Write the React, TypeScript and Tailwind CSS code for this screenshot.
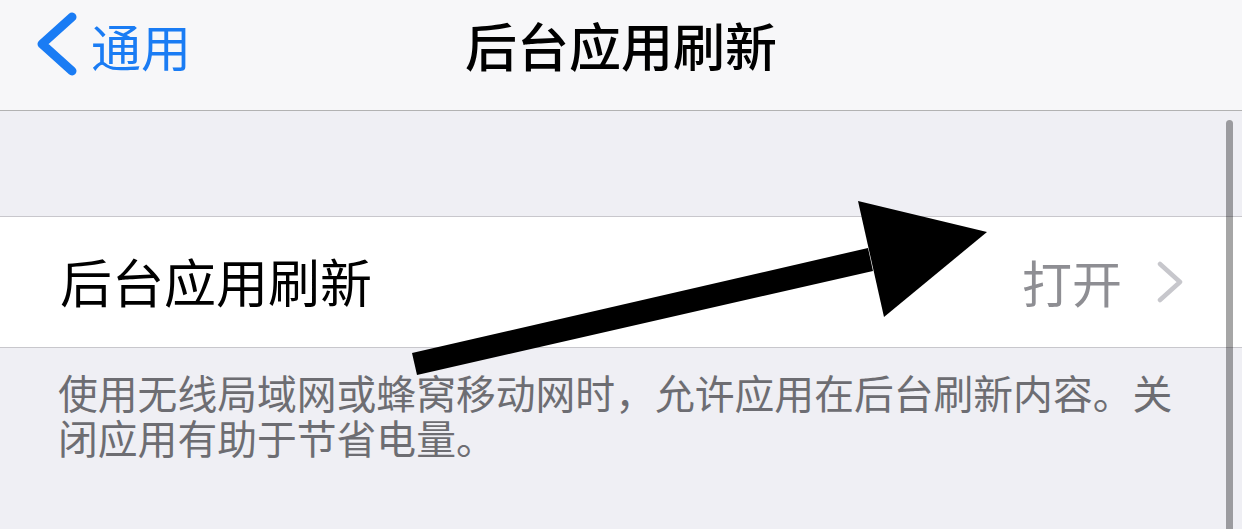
const cjk = { fontFamily: '"Noto Sans CJK SC", "Noto Sans", sans-serif' };

function BackChevron() {
  return (
    <svg width="44" height="66" viewBox="0 0 44 66" className="shrink-0">
      <polyline
        points="36,5 6,32 36,59"
        fill="none"
        stroke="#1a7cf4"
        strokeWidth="9"
        strokeLinecap="round"
        strokeLinejoin="round"
      />
    </svg>
  );
}

function RowChevron() {
  return (
    <svg width="28" height="42" viewBox="0 0 28 42" className="shrink-0">
      <polyline
        points="4,3 24,21 4,39"
        fill="none"
        stroke="#c7c7cc"
        strokeWidth="4.5"
        strokeLinecap="round"
        strokeLinejoin="round"
      />
    </svg>
  );
}

export default function App() {
  return (
    <div className="relative w-[1242px] h-[529px] overflow-hidden bg-[#efeff4]" style={cjk}>
      {/* nav bar */}
      <header className="grid grid-cols-[1fr_auto_1fr] items-center h-[111px] bg-[#f7f7f9] border-b border-[#b2b2b2]">
        <button className="flex items-center gap-[11px] pl-[36px] pb-[20px] text-[#1a7cf4] text-[50px] leading-none">
          <BackChevron />
          <span>通用</span>
        </button>
        <h1 className="pb-[20px] text-[52px] leading-none font-medium text-black">后台应用刷新</h1>
        <div />
      </header>

      <div className="h-[105px]" />

      {/* setting row */}
      <div className="flex items-center h-[132px] bg-white border-y border-[#c8c7cc] pl-[60px] pr-[58px]">
        <span className="flex-1 text-[52px] leading-none text-black pb-[2px]">后台应用刷新</span>
        <span className="text-[50px] leading-none text-[#8e8e93] mr-[34px] pb-[2px]">打开</span>
        <RowChevron />
      </div>

      <p className="pl-[58px] pr-[10px] pt-[21px] text-[39.8px] leading-[45px] text-[#6d6d72] whitespace-nowrap">
        使用无线局域网或蜂窝移动网时，允许应用在后台刷新内容。关
        <br />
        闭应用有助于节省电量。
      </p>

      {/* scroll indicator */}
      <div className="absolute left-[1226px] top-[120px] w-[7px] h-[420px] rounded-full bg-black/[0.35]" />

      {/* annotation arrow */}
      <svg className="absolute inset-0 pointer-events-none" width="1242" height="529" viewBox="0 0 1242 529">
        <polygon points="412,353 868,248 873,271 417,375" fill="#000" />
        <polygon points="858,201 987,232 884,317" fill="#000" />
      </svg>
    </div>
  );
}
